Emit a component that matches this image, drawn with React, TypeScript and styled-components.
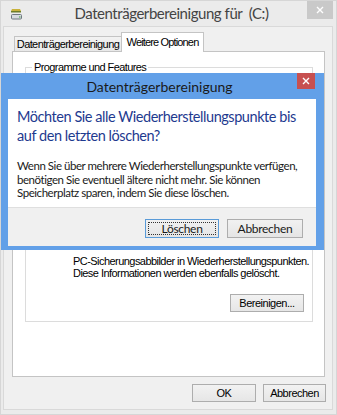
import styled, { createGlobalStyle } from "styled-components";

const segoe = `Lato, "Open Sans", sans-serif`;
const msSans = `"Liberation Sans", Arial, sans-serif`;

const GlobalStyle = createGlobalStyle`
  html, body { margin: 0; padding: 0; }
  body { background: #ebebeb; }
`;

const Frame = styled.div`
  position: relative;
  width: 337px;
  height: 415px;
  box-sizing: border-box;
  background: #ebebeb;
  border: 1px solid #d6d6d6;
  padding: 0 3px 4px 2px;
  display: flex;
  flex-direction: column;
  overflow: hidden;
`;

const TitleBar = styled.div`
  height: 25px;
  display: flex;
  align-items: flex-start;
`;

const AppIcon = styled.svg`
  margin: 7px 0 0 7px;
  flex: none;
`;

const Caption = styled.div`
  flex: 1;
  text-align: center;
  font: 15px/20px ${segoe};
  letter-spacing: -0.45px;
  color: #444;
  padding: 2px 0 0 13px;
  white-space: nowrap;
`;

const CloseBox = styled.div<{ $active?: boolean }>`
  flex: none;
  width: ${(p) => (p.$active ? 18 : 26)}px;
  height: ${(p) => (p.$active ? 16 : 18)}px;
  background: ${(p) => (p.$active ? "#c75050" : "#c9c9c9")};
  display: flex;
  align-items: center;
  justify-content: center;
`;

const Client = styled.div`
  flex: 1;
  background: #f0f0f0;
  border: 1px solid #d9d9d9;
  padding: 5px 7px 0 8px;
  display: flex;
  flex-direction: column;
`;

const TabRow = styled.div`
  height: 19px;
  display: flex;
  align-items: flex-end;
  padding-left: 2px;
`;

const Tab = styled.div<{ $active?: boolean }>`
  box-sizing: border-box;
  width: ${(p) => (p.$active ? 83 : 107)}px;
  height: ${(p) => (p.$active ? 20 : 15)}px;
  margin-bottom: ${(p) => (p.$active ? -1 : 0)}px;
  position: relative;
  z-index: ${(p) => (p.$active ? 1 : 0)};
  text-align: center;
  border: 1px solid #c4c4c4;
  border-bottom: none;
  border-right: ${(p) => (p.$active ? "1px solid #c4c4c4" : "none")};
  background: ${(p) => (p.$active ? "#fff" : "linear-gradient(#f2f2f2, #e8e8e8)")};
  font: 11px/${(p) => (p.$active ? 18 : 14)}px ${msSans};
  letter-spacing: ${(p) => (p.$active ? -0.85 : -0.6)}px;
  color: #000;
  white-space: nowrap;
`;

const Panel = styled.div`
  box-sizing: border-box;
  height: 326px;
  background: #fff;
  border: 1px solid #c4c4c4;
  padding: 9px 11px 0 12px;
  display: flex;
  flex-direction: column;
  gap: 8px;
`;

const GroupBox = styled.div<{ $h: number }>`
  box-sizing: border-box;
  height: ${(p) => p.$h}px;
  margin-top: 6px;
  border: 1px solid #dcdcdc;
  display: flex;
  flex-direction: column;
  padding: 0 8px 9px 47px;
`;

const Legend = styled.span`
  align-self: flex-start;
  margin: -7px 0 0 -41px;
  padding: 0 2px;
  background: #fff;
  font: 11px/12px ${msSans};
  letter-spacing: -0.6px;
  color: #000;
  white-space: nowrap;
`;

const GroupText = styled.div`
  margin-top: auto;
  font: 11px/11.5px ${msSans};
  letter-spacing: -0.55px;
  color: #000;
  white-space: nowrap;
`;

const WinButton = styled.button<{ $w: number }>`
  box-sizing: border-box;
  width: ${(p) => p.$w}px;
  height: 18px;
  padding: 0;
  border: 1px solid #adadad;
  background: linear-gradient(#f2f2f2, #e6e6e6);
  font: 11px ${msSans};
  letter-spacing: -0.5px;
  color: #000;
`;

const GroupActions = styled.div`
  display: flex;
  justify-content: flex-end;
  margin-top: 15px;
`;

const ButtonRow = styled.div`
  display: flex;
  justify-content: flex-end;
  gap: 7px;
  padding-top: 7px;
  margin-right: -1px;
`;

const Dialog = styled.div`
  position: absolute;
  left: 0;
  top: 72px;
  width: 323px;
  height: 177px;
  box-sizing: border-box;
  background: #62a0e8;
  display: flex;
  flex-direction: column;
  padding: 0 8px 4px 7px;
`;

const DialogHead = styled.div`
  height: 26px;
  display: flex;
  align-items: flex-start;
  margin: 0 -8px 0 -7px;
  padding-right: 9px;
`;

const DialogCaption = styled.div`
  flex: 1;
  text-align: center;
  font: 14px/20px ${segoe};
  color: #1a1a1a;
  padding: 4px 0 0 21px;
  white-space: nowrap;
`;

const DialogBody = styled.div`
  flex: 1;
  background: #fff;
  padding: 9px 9px 0;
`;

const Instruction = styled.div`
  font: 14.5px/18.5px ${segoe};
  letter-spacing: -0.45px;
  color: #1e3a8f;
  white-space: nowrap;
`;

const Message = styled.div`
  margin-top: 14px;
  font: 11.5px/13.5px ${segoe};
  letter-spacing: -0.45px;
  color: #1a1a1a;
  white-space: nowrap;
`;

const DialogFoot = styled.div`
  height: 39px;
  box-sizing: border-box;
  background: #f0f0f0;
  border-top: 1px solid #dfdfdf;
  display: flex;
  justify-content: flex-end;
  gap: 8px;
  padding: 11px 13px 0 0;
`;

const DlgButton = styled.button<{ $w: number; $default?: boolean }>`
  box-sizing: border-box;
  width: ${(p) => p.$w}px;
  height: 19px;
  padding: 0;
  border: 1px solid ${(p) => (p.$default ? "#5a9bd8" : "#adadad")};
  background: linear-gradient(#f1f1f1, #e5e5e5);
  font: 12px ${segoe};
  letter-spacing: -0.3px;
  color: #1a1a1a;
  outline: ${(p) => (p.$default ? "1px dotted #333" : "none")};
  outline-offset: -4px;
`;

function CloseGlyph({ color }: { color: string }) {
  return (
    <svg width="8" height="8" viewBox="0 0 8 8">
      <path d="M1 1L7 7M7 1L1 7" stroke={color} strokeWidth="1.4" />
    </svg>
  );
}

export default function App() {
  return (
    <>
      <GlobalStyle />
      <Frame>
        <TitleBar>
          <AppIcon width="13" height="12" viewBox="0 0 13 12">
            <path d="M2 1h8l1 2H1z" fill="#c9b23c" />
            <rect x="1" y="3" width="10" height="1.5" fill="#6d7d2a" />
            <rect x="1.5" y="6.5" width="10" height="4.5" rx="1" fill="#d7dbe0" stroke="#6f7780" />
            <rect x="9" y="8.5" width="1.5" height="1" fill="#3fae3f" />
          </AppIcon>
          <Caption>Datenträgerbereinigung für&nbsp;&nbsp;(C:)</Caption>
          <CloseBox>
            <CloseGlyph color="#fff" />
          </CloseBox>
        </TitleBar>

        <Client>
          <TabRow>
            <Tab>Datenträgerbereinigung</Tab>
            <Tab $active>Weitere Optionen</Tab>
          </TabRow>
          <Panel>
            <GroupBox $h={92}>
              <Legend>Programme und Features</Legend>
            </GroupBox>
            <GroupBox $h={149}>
              <GroupText>
                PC-Sicherungsabbilder in Wiederherstellungspunkten.
                <br />
                Diese Informationen werden ebenfalls gelöscht.
              </GroupText>
              <GroupActions>
                <WinButton $w={74}>Bereinigen...</WinButton>
              </GroupActions>
            </GroupBox>
          </Panel>
          <ButtonRow>
            <WinButton $w={64}>OK</WinButton>
            <WinButton $w={63}>Abbrechen</WinButton>
          </ButtonRow>
        </Client>

        <Dialog>
          <DialogHead>
            <DialogCaption>Datenträgerbereinigung</DialogCaption>
            <CloseBox $active>
              <CloseGlyph color="#fff" />
            </CloseBox>
          </DialogHead>
          <DialogBody>
            <Instruction>
              Möchten Sie alle Wiederherstellungspunkte bis
              <br />
              auf den letzten löschen?
            </Instruction>
            <Message>
              Wenn Sie über mehrere Wiederherstellungspunkte verfügen,
              <br />
              benötigen Sie eventuell ältere nicht mehr. Sie können
              <br />
              Speicherplatz sparen, indem Sie diese löschen.
            </Message>
          </DialogBody>
          <DialogFoot>
            <DlgButton $w={74} $default>
              Löschen
            </DlgButton>
            <DlgButton $w={76}>Abbrechen</DlgButton>
          </DialogFoot>
        </Dialog>
      </Frame>
    </>
  );
}
